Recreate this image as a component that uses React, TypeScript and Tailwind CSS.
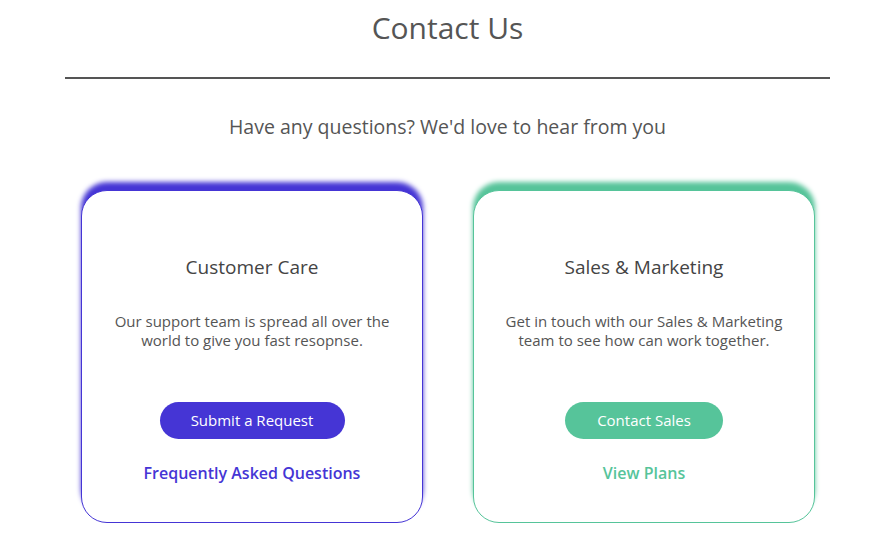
import React from "react";

type CardProps = {
  title: string;
  text: string[];
  button: string;
  link: string;
  tone: "purple" | "green";
};

function ContactCard({ title, text, button, link, tone }: CardProps) {
  const purple = tone === "purple";
  return (
    <div
      className={
        purple
          ? "flex h-[333px] w-[342px] flex-col items-center rounded-[26px] border border-[#4535d5] bg-white pt-[64px] shadow-[0_-8px_5px_#4535d5]"
          : "flex h-[333px] w-[342px] flex-col items-center rounded-[26px] border border-[#56c49a] bg-white pt-[64px] shadow-[0_-8px_5px_#56c49a]"
      }
    >
      <h2 className="text-[19px] leading-[24px] text-[#444]">{title}</h2>
      <p className="mt-[33px] text-center text-[15px] leading-[19px] text-[#555]">
        {text.map((t) => (
          <span key={t} className="block">
            {t}
          </span>
        ))}
      </p>
      <button
        className={
          purple
            ? "mt-[52px] h-[37px] w-[185px] rounded-full bg-[#4535d5] text-[15px] text-white"
            : "mt-[52px] h-[37px] w-[158px] rounded-full bg-[#56c49a] text-[15px] text-white"
        }
      >
        {button}
      </button>
      <a
        href="#"
        className={
          purple
            ? "mt-[23px] text-[16px] font-semibold leading-[22px] text-[#4535d5]"
            : "mt-[23px] text-[16px] font-semibold leading-[22px] text-[#56c49a]"
        }
      >
        {link}
      </a>
    </div>
  );
}

export default function App() {
  return (
    <div className="min-h-[539px] bg-white font-['Open_Sans',sans-serif]">
      <div className="ml-[65px] w-[765px]">
        <h1 className="pt-[9px] text-center text-[30px] leading-[38px] text-[#555]">
          Contact Us
        </h1>
        <div className="mt-[30px] h-[2px] bg-[#555]" />
        <p className="mt-[35px] text-center text-[19.5px] leading-[26px] text-[#555]">
          Have any questions? We'd love to hear from you
        </p>
        <div className="mt-[50px] flex justify-between px-[16px] pr-[15px]">
          <ContactCard
            tone="purple"
            title="Customer Care"
            text={["Our support team is spread all over the", "world to give you fast resopnse."]}
            button="Submit a Request"
            link="Frequently Asked Questions"
          />
          <ContactCard
            tone="green"
            title="Sales & Marketing"
            text={["Get in touch with our Sales & Marketing", "team to see how can work together."]}
            button="Contact Sales"
            link="View Plans"
          />
        </div>
      </div>
    </div>
  );
}
